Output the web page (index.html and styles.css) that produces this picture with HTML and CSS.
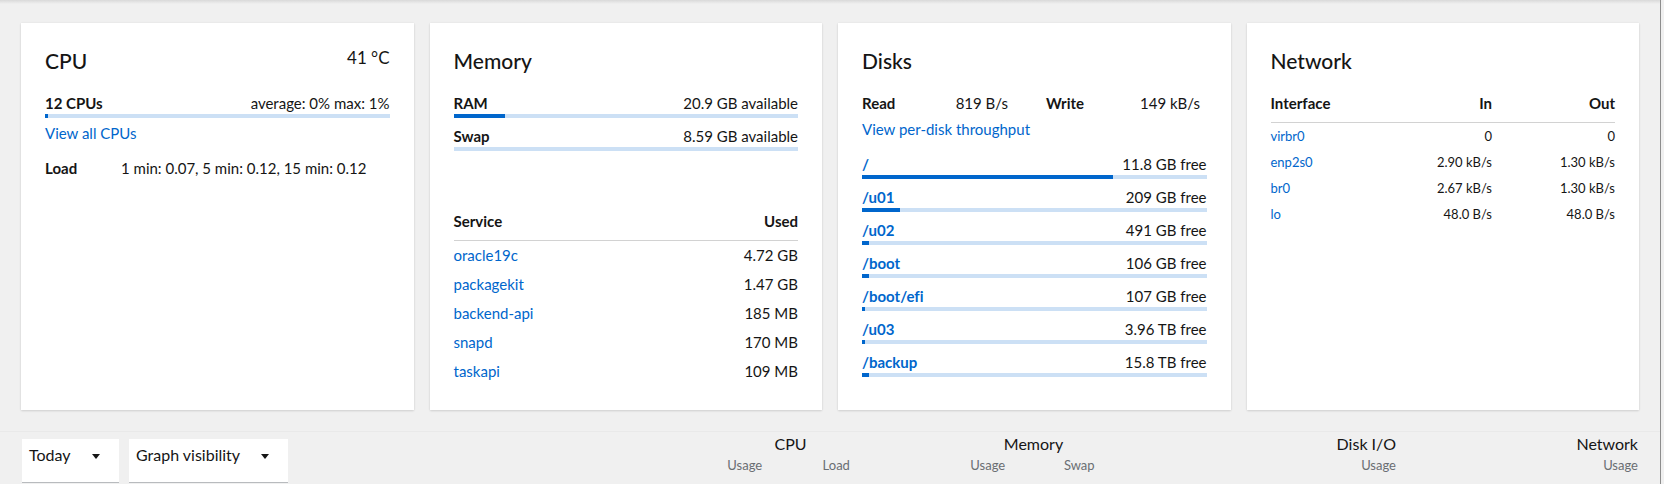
FILE: index.html
```html
<!DOCTYPE html>
<html lang="en">
<head>
<meta charset="utf-8">
<title>Metrics</title>
<link rel="stylesheet" href="styles.css">
</head>
<body>
<div class="page">
  <div class="cards">
    <section class="card">
      <div class="card-head">
        <h2 class="card-title">CPU</h2>
        <span class="temp">41 °C</span>
      </div>
      <div class="progress">
        <div class="progress-label"><b>12 CPUs</b><span>average: 0% max: 1%</span></div>
        <div class="bar"><div class="fill" style="width:1%"></div></div>
      </div>
      <a class="link link-after-bar" href="#">View all CPUs</a>
      <div class="load"><b>Load</b><span>1 min: 0.07, 5 min: 0.12, 15 min: 0.12</span></div>
    </section>

    <section class="card">
      <div class="card-head">
        <h2 class="card-title">Memory</h2>
      </div>
      <div class="progress">
        <div class="progress-label"><b>RAM</b><span>20.9 GB available</span></div>
        <div class="bar"><div class="fill" style="width:15%"></div></div>
      </div>
      <div class="progress">
        <div class="progress-label"><b>Swap</b><span>8.59 GB available</span></div>
        <div class="bar"><div class="fill" style="width:0%"></div></div>
      </div>
      <table class="svc-table">
        <thead><tr><th>Service</th><th class="num">Used</th></tr></thead>
        <tbody>
          <tr><td><a class="link" href="#">oracle19c</a></td><td class="num">4.72 GB</td></tr>
          <tr><td><a class="link" href="#">packagekit</a></td><td class="num">1.47 GB</td></tr>
          <tr><td><a class="link" href="#">backend-api</a></td><td class="num">185 MB</td></tr>
          <tr><td><a class="link" href="#">snapd</a></td><td class="num">170 MB</td></tr>
          <tr><td><a class="link" href="#">taskapi</a></td><td class="num">109 MB</td></tr>
        </tbody>
      </table>
    </section>

    <section class="card">
      <div class="card-head">
        <h2 class="card-title">Disks</h2>
      </div>
      <div class="io">
        <div class="io-cell"><b>Read</b><span>819 B/s</span></div>
        <div class="io-cell io-write"><b>Write</b><span>149 kB/s</span></div>
      </div>
      <a class="link link-after-io" href="#">View per-disk throughput</a>
      <div class="disks">
        <div class="progress">
          <div class="progress-label"><a class="disk-link" href="#">/</a><span>11.8 GB free</span></div>
          <div class="bar"><div class="fill" style="width:73%"></div></div>
        </div>
        <div class="progress">
          <div class="progress-label"><a class="disk-link" href="#">/u01</a><span>209 GB free</span></div>
          <div class="bar"><div class="fill" style="width:11%"></div></div>
        </div>
        <div class="progress">
          <div class="progress-label"><a class="disk-link" href="#">/u02</a><span>491 GB free</span></div>
          <div class="bar"><div class="fill" style="width:2%"></div></div>
        </div>
        <div class="progress">
          <div class="progress-label"><a class="disk-link" href="#">/boot</a><span>106 GB free</span></div>
          <div class="bar"><div class="fill" style="width:2%"></div></div>
        </div>
        <div class="progress">
          <div class="progress-label"><a class="disk-link" href="#">/boot/efi</a><span>107 GB free</span></div>
          <div class="bar"><div class="fill" style="width:1%"></div></div>
        </div>
        <div class="progress">
          <div class="progress-label"><a class="disk-link" href="#">/u03</a><span>3.96 TB free</span></div>
          <div class="bar"><div class="fill" style="width:1%"></div></div>
        </div>
        <div class="progress">
          <div class="progress-label"><a class="disk-link" href="#">/backup</a><span>15.8 TB free</span></div>
          <div class="bar"><div class="fill" style="width:2%"></div></div>
        </div>
      </div>
    </section>

    <section class="card">
      <div class="card-head">
        <h2 class="card-title">Network</h2>
      </div>
      <table class="net-table">
        <thead><tr><th>Interface</th><th class="num">In</th><th class="num">Out</th></tr></thead>
        <tbody>
          <tr><td><a class="link" href="#">virbr0</a></td><td class="num">0</td><td class="num">0</td></tr>
          <tr><td><a class="link" href="#">enp2s0</a></td><td class="num">2.90 kB/s</td><td class="num">1.30 kB/s</td></tr>
          <tr><td><a class="link" href="#">br0</a></td><td class="num">2.67 kB/s</td><td class="num">1.30 kB/s</td></tr>
          <tr><td><a class="link" href="#">lo</a></td><td class="num">48.0 B/s</td><td class="num">48.0 B/s</td></tr>
        </tbody>
      </table>
    </section>
  </div>

  <div class="toolbar">
    <div class="toolbar-left">
      <button class="select select-today" type="button"><span>Today</span><span class="caret"></span></button>
      <button class="select select-graph" type="button"><span>Graph visibility</span><span class="caret"></span></button>
    </div>
    <div class="group group-cpu">
      <div class="group-title">CPU</div>
      <div class="group-cols"><span>Usage</span><span>Load</span></div>
    </div>
    <div class="group group-mem">
      <div class="group-title">Memory</div>
      <div class="group-cols"><span>Usage</span><span>Swap</span></div>
    </div>
    <div class="group group-single group-disk">
      <div class="group-title">Disk I/O</div>
      <div class="group-cols"><span>Usage</span></div>
    </div>
    <div class="group group-single group-net">
      <div class="group-title">Network</div>
      <div class="group-cols"><span>Usage</span></div>
    </div>
  </div>
</div>
</body>
</html>
```

FILE: styles.css
```css
html, body {
  margin: 0;
  padding: 0;
  height: 100%;
  overflow: hidden;
}

body {
  background: #f0f0f0;
  font-family: "Lato", "Liberation Sans", sans-serif;
  font-size: 15px;
  line-height: 22px;
  color: #151515;
  font-variant-ligatures: none;
}

.page {
  width: 1660px;
  height: 484px;
  border-right: 1px solid #8d8d8d;
  background: linear-gradient(#d9d9d9, #f0f0f0 4px);
  box-sizing: content-box;
}

.cards {
  display: grid;
  grid-template-columns: repeat(4, 1fr);
  column-gap: 16px;
  padding: 23px 21px 0 21px;
  align-items: stretch;
}

.card {
  background: #fff;
  padding: 24px;
  box-shadow: 0 1px 2px rgba(3, 3, 3, 0.12), 0 0 2px rgba(3, 3, 3, 0.06);
  min-width: 0;
}

.card-head {
  display: flex;
  justify-content: space-between;
  align-items: flex-start;
  margin-bottom: 17px;
}

.card-title {
  margin: 0;
  font-size: 21px;
  line-height: 28px;
  font-weight: 500;
}

.temp {
  font-size: 17px;
  line-height: 22px;
}

b {
  font-weight: 700;
}

.progress + .progress {
  margin-top: 7px;
}

.progress-label {
  display: flex;
  justify-content: space-between;
  line-height: 22px;
}

.bar {
  height: 4px;
  background: #cce0f5;
}

.fill {
  height: 100%;
  background: #0066cc;
}

.link {
  color: #0066cc;
  text-decoration: none;
}

.link-after-bar {
  display: block;
  margin-top: 4px;
}

.load {
  display: grid;
  grid-template-columns: 76px auto;
  margin-top: 13px;
}

/* Memory table */
.svc-table {
  width: 100%;
  border-collapse: collapse;
  margin-top: 59px;
}

.svc-table th {
  text-align: left;
  font-weight: 700;
  padding: 0 0 8px 0;
  border-bottom: 1px solid #d2d2d2;
}

.svc-table td {
  padding: 0;
  line-height: 29px;
}

.num {
  text-align: right;
}

.svc-table th.num,
.net-table th.num {
  text-align: right;
}

/* Disks */
.io {
  display: grid;
  grid-template-columns: 146px 154px;
  column-gap: 38px;
}

.io-cell {
  display: flex;
  justify-content: space-between;
}

.link-after-io {
  display: block;
  margin-top: 4px;
}

.disks {
  margin-top: 13px;
}

.disk-link {
  color: #0066cc;
  font-weight: 700;
  text-decoration: none;
}

/* Network */
.net-table {
  width: 100%;
  border-collapse: collapse;
  table-layout: fixed;
}

.net-table th {
  text-align: left;
  font-weight: 700;
  padding: 0 0 8px 0;
  border-bottom: 1px solid #d2d2d2;
}

.net-table th:nth-child(2),
.net-table th:nth-child(3) {
  width: 123px;
}

.net-table td {
  font-size: 13px;
  line-height: 26px;
  padding: 0;
}

/* Toolbar */
.toolbar {
  display: flex;
  align-items: flex-start;
  margin-top: 21px;
  border-top: 1px solid #e9e9e9;
  padding: 0 22px 0 22px;
  height: 52px;
}

.toolbar-left {
  flex: 1;
  display: flex;
  gap: 10px;
  padding-top: 7px;
}

.select {
  display: flex;
  align-items: flex-start;
  height: 44px;
  box-sizing: border-box;
  padding: 6px 19px 0 7px;
  background: #fff;
  border: 0;
  border-bottom: 1px solid #b8bbbe;
  font-family: inherit;
  font-size: 16px;
  line-height: 20px;
  color: #151515;
}

.select-today {
  width: 97px;
}

.select-graph {
  width: 159px;
}

.caret {
  margin-left: auto;
  margin-top: 9px;
  width: 0;
  height: 0;
  border-left: 4px solid transparent;
  border-right: 4px solid transparent;
  border-top: 5px solid #151515;
}

.group {
  padding-top: 2px;
}

.group-title {
  font-size: 16px;
  line-height: 20px;
  text-align: center;
}

.group-cols {
  display: grid;
  grid-template-columns: 1fr 1fr;
  margin-top: 3px;
  font-size: 13px;
  line-height: 16px;
  color: #6a6e73;
  text-align: center;
}

.group-cpu,
.group-mem {
  width: 183px;
}

.group-mem {
  margin-left: 60px;
}

.group-single {
  width: 92px;
}

.group-single .group-title,
.group-single .group-cols {
  text-align: right;
}

.group-single .group-cols {
  grid-template-columns: 1fr;
}

.group-disk {
  margin-left: 179px;
}

.group-net {
  margin-left: 150px;
}
```
